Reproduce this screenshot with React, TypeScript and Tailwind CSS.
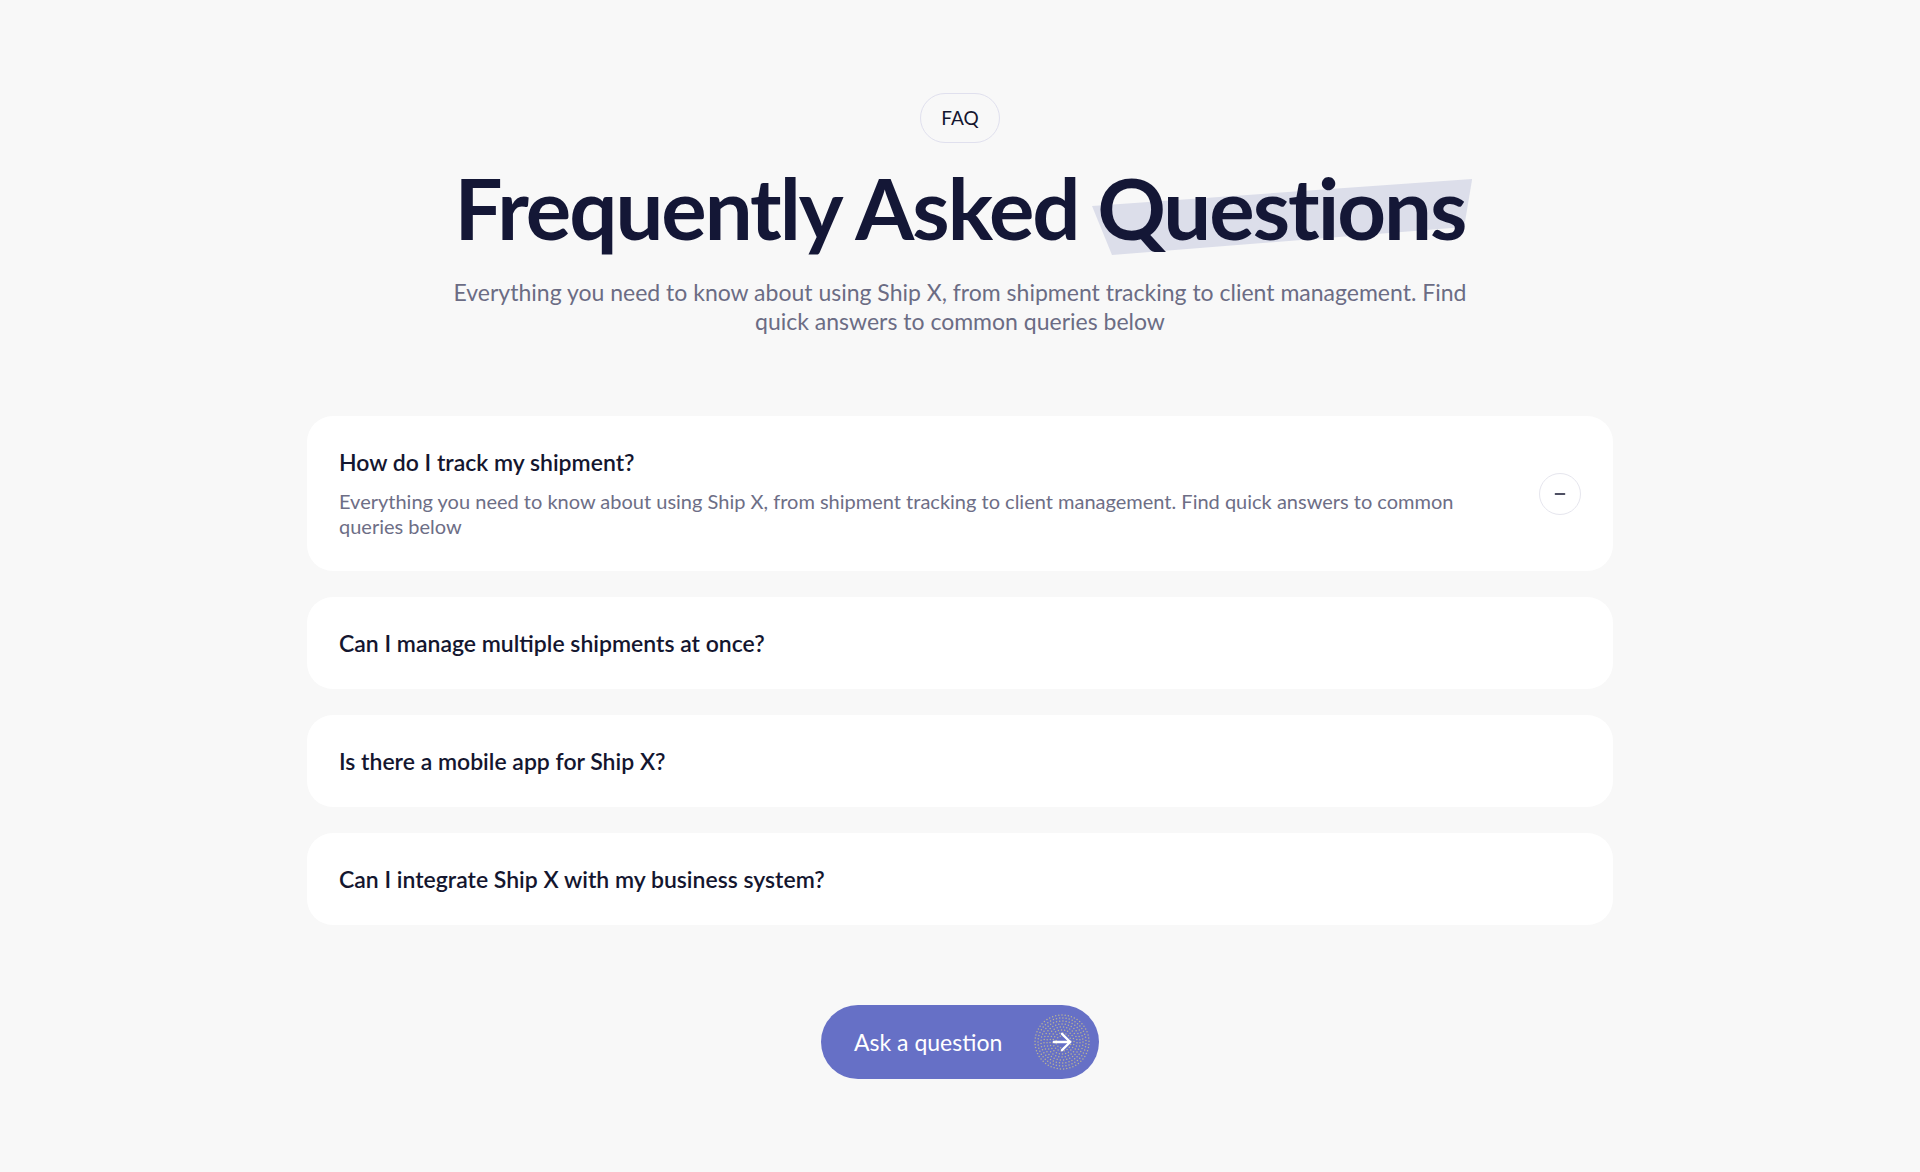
import { Minus, ArrowRight } from 'lucide-react';

const faqs = [
  {
    q: 'How do I track my shipment?',
    a: 'Everything you need to know about using Ship X, from shipment tracking to client management. Find quick answers to common queries below',
    open: true,
  },
  { q: 'Can I manage multiple shipments at once?', a: '', open: false },
  { q: 'Is there a mobile app for Ship X?', a: '', open: false },
  { q: 'Can I integrate Ship X with my business system?', a: '', open: false },
];

function DotCircle() {
  // dotted halo behind the arrow
  const dots: { x: number; y: number }[] = [];
  for (let r = 6; r <= 27; r += 3) {
    const n = Math.round((2 * Math.PI * r) / 3.2);
    for (let i = 0; i < n; i++) {
      const t = (i / n) * Math.PI * 2 + r;
      dots.push({ x: 28 + r * Math.cos(t), y: 28 + r * Math.sin(t) });
    }
  }
  return (
    <svg width="56" height="56" viewBox="0 0 56 56" className="absolute inset-0">
      {dots.map((d, i) => (
        <circle key={i} cx={d.x} cy={d.y} r="0.75" fill="#c9c08a" opacity="0.85" />
      ))}
    </svg>
  );
}

function FaqItem({ q, a, open }: { q: string; a: string; open: boolean }) {
  return (
    <div className="bg-white rounded-[26px] px-8 py-8 flex items-center justify-between gap-10">
      <div className="flex-1">
        <h3 className="text-[23px] leading-[28px] font-semibold text-[#14162f]">{q}</h3>
        {open && (
          <p className="mt-[13px] text-[20px] leading-[25px] text-[#6d6e86]">{a}</p>
        )}
      </div>
      {open && (
        <button className="w-[42px] h-[42px] rounded-full border border-[#e6e6ee] flex items-center justify-center shrink-0">
          <Minus size={16} strokeWidth={2} className="text-[#14162f]" />
        </button>
      )}
    </div>
  );
}

export default function App() {
  return (
    <div
      className="bg-[#f8f8f8] min-h-screen w-full pt-[93px] pb-24"
      style={{ fontFamily: 'Lato, "Noto Sans", sans-serif' }}
    >
      <div className="flex flex-col items-center">
        <span className="h-[50px] px-5 rounded-full border border-[#e0e0ee] flex items-center text-[19px] text-[#14162f]">
          FAQ
        </span>

        <h1 className="mt-[12px] text-[85px] leading-[104px] font-bold text-[#141736] tracking-[-2px]">
          Frequently Asked{' '}
          <span className="relative inline-block">
            <svg
              className="absolute -left-[5px] top-[24px] h-[76px] w-[calc(100%+12px)]"
              viewBox="0 0 380 76"
              preserveAspectRatio="none"
            >
              <polygon points="0,27 380,0 372,48 20,76" fill="#dcdeea" />
            </svg>
            <span className="relative">Questions</span>
          </span>
        </h1>

        <p className="mt-[19px] max-w-[1030px] text-center text-[23px] leading-[29px] text-[#6b6c84]">
          Everything you need to know about using Ship X, from shipment tracking to client management. Find
          quick answers to common queries below
        </p>
      </div>

      <div className="mx-auto w-[1306px] mt-[80px] flex flex-col gap-[26px]">
        {faqs.map((f) => (
          <FaqItem key={f.q} q={f.q} a={f.a} open={f.open} />
        ))}
      </div>

      <div className="flex justify-center mt-[80px]">
        <button className="h-[74px] w-[278px] rounded-full bg-[#6670c6] flex items-center justify-between pl-[33px] pr-[9px]">
          <span className="text-white text-[23px]">Ask a question</span>
          <span className="relative w-[56px] h-[56px] flex items-center justify-center">
            <DotCircle />
            <ArrowRight size={28} strokeWidth={2} className="relative text-white" />
          </span>
        </button>
      </div>
    </div>
  );
}
